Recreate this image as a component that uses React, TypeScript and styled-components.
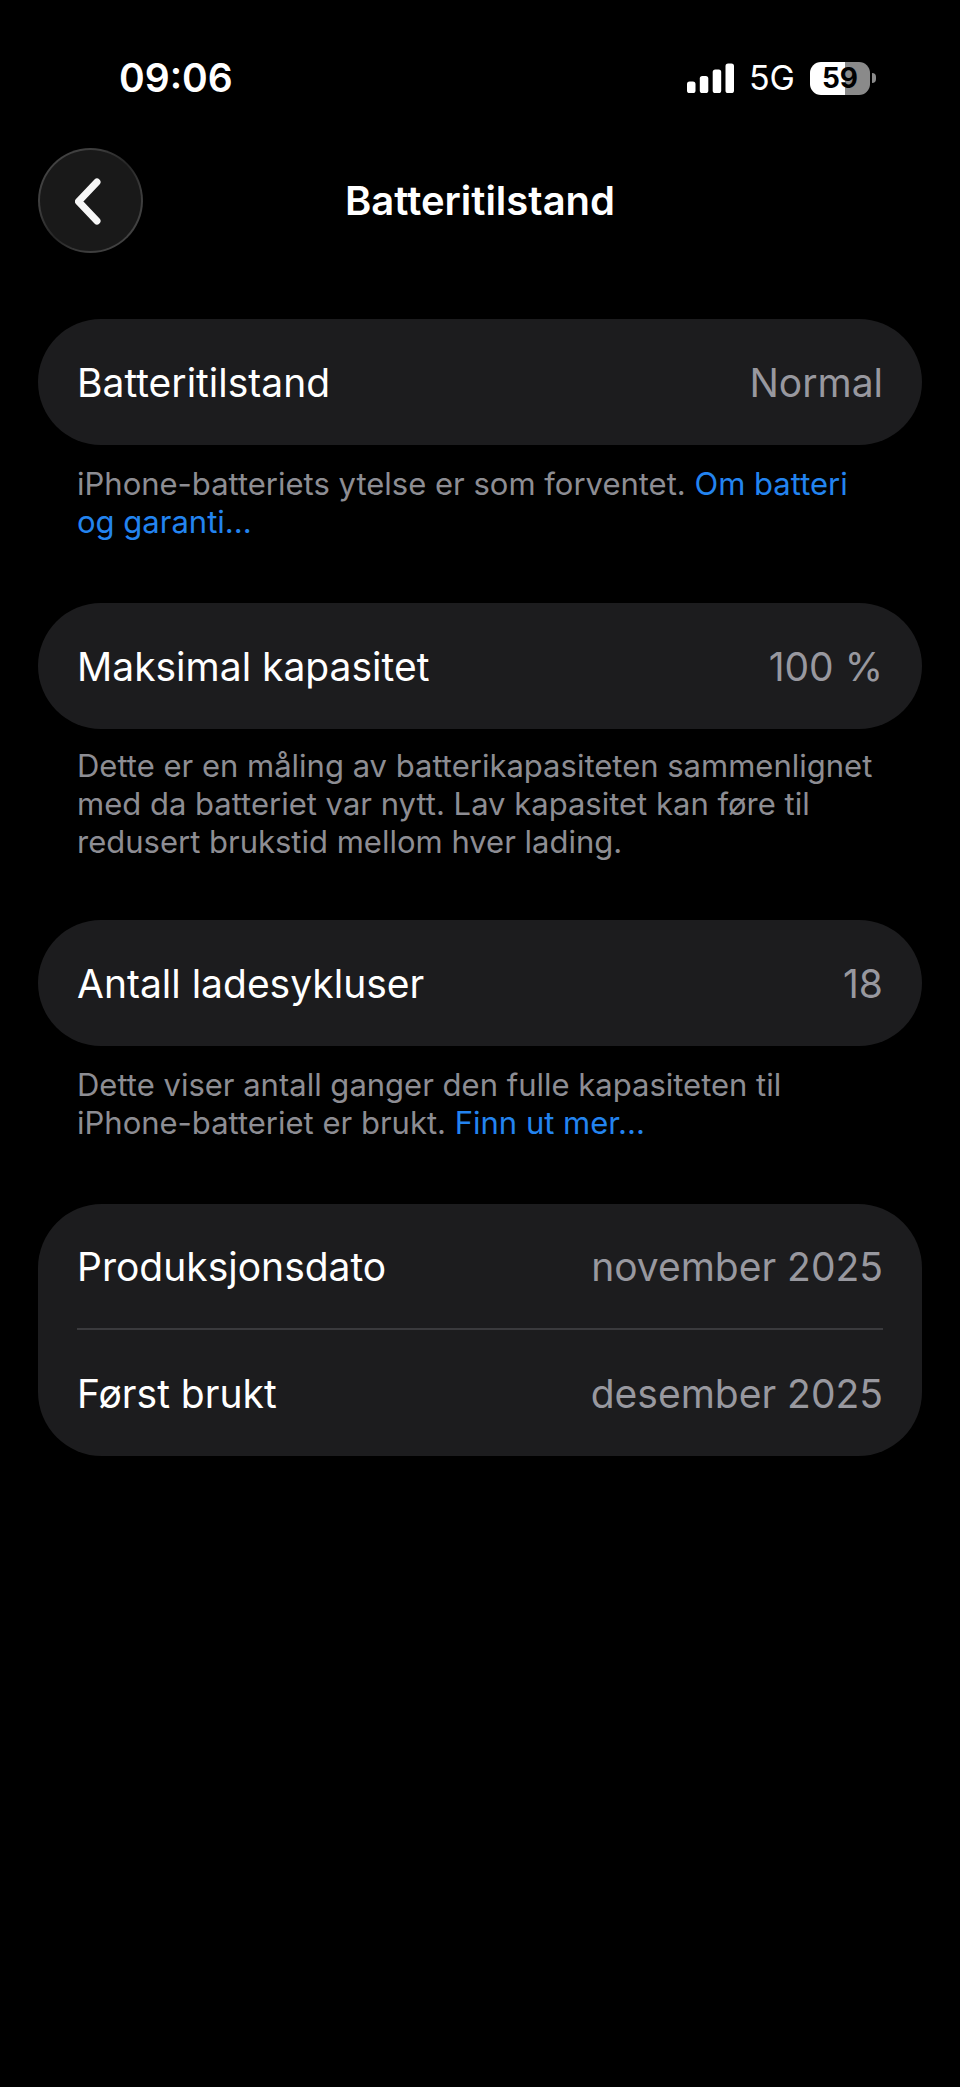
import React from "react";
import styled, { createGlobalStyle } from "styled-components";

const GlobalStyle = createGlobalStyle`
  *, *::before, *::after { box-sizing: border-box; }
  body {
    margin: 0;
    background: #000;
    color: #fff;
    font-family: Inter, "Liberation Sans", sans-serif;
    font-size: 39px;
    line-height: 48px;
  }
`;

const Screen = styled.div`
  min-height: 100vh;
  background: #000;
`;

const StatusBar = styled.header`
  display: flex;
  align-items: center;
  justify-content: space-between;
  padding: 54px 84px 0 119px;
`;

const Time = styled.time`
  font-size: 39px;
  font-weight: 600;
`;

const Indicators = styled.div`
  display: flex;
  align-items: center;
  gap: 15px;
`;

const Network = styled.span`
  font-size: 34px;
  font-weight: 400;
`;

const SignalIcon = styled.svg`
  display: block;
  width: 47px;
  height: 30px;
`;

const Battery = styled.div`
  display: flex;
  align-items: center;
  gap: 2px;
`;

const BatteryBody = styled.div`
  width: 60px;
  height: 33px;
  border-radius: 11px;
  background: linear-gradient(to right, #fff 59%, #8a8a8a 59%);
  color: #000;
  font-size: 28px;
  font-weight: 700;
  line-height: 33px;
  text-align: center;
`;

const BatteryTip = styled.div`
  width: 4px;
  height: 10px;
  border-radius: 0 4px 4px 0;
  background: #8a8a8a;
`;

const NavBar = styled.nav`
  display: grid;
  grid-template-columns: 105px 1fr 105px;
  align-items: center;
  padding: 46px 38px 0;
`;

const BackButton = styled.button`
  display: flex;
  align-items: center;
  justify-content: center;
  width: 105px;
  height: 105px;
  padding: 0;
  border: 2px solid transparent;
  border-radius: 50%;
  background:
    linear-gradient(#191919, #191919) padding-box,
    linear-gradient(135deg, #444 10%, #3c3c3c 30%, #262626 50%, #3c3c3c 70%, #444 90%) border-box;
  color: #f6f6f6;
  cursor: pointer;
`;

const Title = styled.h1`
  margin: 0;
  font-size: 40px;
  font-weight: 600;
  line-height: 48px;
  text-align: center;
`;

const Content = styled.main`
  padding: 66px 38px 0;
`;

const Card = styled.dl`
  margin: 0;
  padding: 0 39px;
  border-radius: 64px;
  background: #1c1c1e;
`;

const Row = styled.div`
  display: flex;
  align-items: center;
  justify-content: space-between;
  height: 126px;
  padding-top: 1px;

  &:not(:last-child) {
    border-bottom: 2px solid #3a3a3d;
  }
`;

const Label = styled.dt``;

const Value = styled.dd`
  margin: 0;
  color: #98989f;
`;

const Note = styled.p<{ $compact?: boolean }>`
  margin: 0;
  padding: ${(p) => (p.$compact ? "18px 39px 59px" : "20px 39px 62px")};
  color: #8d8d93;
  font-size: 31px;
  line-height: 38px;
`;

const NoteLink = styled.a`
  color: #2384f0;
  text-decoration: none;
`;

export default function App() {
  return (
    <Screen>
      <GlobalStyle />
      <StatusBar>
        <Time>09:06</Time>
        <Indicators>
          <SignalIcon viewBox="0 0 47 30" fill="#fff" role="img" aria-label="Signal">
            <rect x="0" y="18.500" width="8.500" height="11.500" rx="2.600" />
            <rect x="12.800" y="13" width="8.500" height="17" rx="2.600" />
            <rect x="25.700" y="6.500" width="8.500" height="23.500" rx="2.600" />
            <rect x="38.500" y="0.500" width="8.500" height="29.500" rx="2.600" />
          </SignalIcon>
          <Network>5G</Network>
          <Battery>
            <BatteryBody>59</BatteryBody>
            <BatteryTip />
          </Battery>
        </Indicators>
      </StatusBar>

      <NavBar>
        <BackButton type="button" aria-label="Tilbake">
          <svg width="32" height="50" viewBox="0 0 32 50" fill="none" stroke="currentColor" strokeWidth="7" strokeLinecap="round" strokeLinejoin="round" aria-hidden="true">
            <path d="M22 6 L3.500 25.500 L22 45" />
          </svg>
        </BackButton>
        <Title>Batteritilstand</Title>
      </NavBar>

      <Content>
        <section>
          <Card>
            <Row>
              <Label>Batteritilstand</Label>
              <Value>Normal</Value>
            </Row>
          </Card>
          <Note>
            iPhone-batteriets ytelse er som forventet. <NoteLink href="#garanti">Om batteri og garanti...</NoteLink>
          </Note>
        </section>

        <section>
          <Card>
            <Row>
              <Label>Maksimal kapasitet</Label>
              <Value>100 %</Value>
            </Row>
          </Card>
          <Note $compact>
            Dette er en måling av batterikapasiteten sammenlignet med da batteriet var nytt. Lav kapasitet kan føre til
            redusert brukstid mellom hver lading.
          </Note>
        </section>

        <section>
          <Card>
            <Row>
              <Label>Antall ladesykluser</Label>
              <Value>18</Value>
            </Row>
          </Card>
          <Note>
            Dette viser antall ganger den fulle kapasiteten til iPhone-batteriet er brukt.{" "}
            <NoteLink href="#ladesykluser">Finn ut mer...</NoteLink>
          </Note>
        </section>

        <section>
          <Card>
            <Row>
              <Label>Produksjonsdato</Label>
              <Value>november 2025</Value>
            </Row>
            <Row>
              <Label>Først brukt</Label>
              <Value>desember 2025</Value>
            </Row>
          </Card>
        </section>
      </Content>
    </Screen>
  );
}
